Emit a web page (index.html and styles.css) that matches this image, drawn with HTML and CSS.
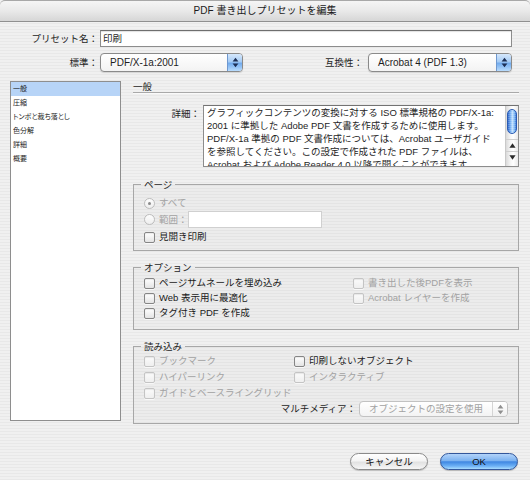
FILE: index.html
```html
<!DOCTYPE html>
<html lang="ja">
<head>
<meta charset="utf-8">
<title>PDF 書き出しプリセットを編集</title>
<link rel="stylesheet" href="styles.css">
</head>
<body>
<div class="window">
  <div class="titlebar">PDF 書き出しプリセットを編集</div>
  <div class="content">
    <div class="row row-name">
      <span class="lbl">プリセット名：</span>
      <div class="textfield tf-name">印刷</div>
    </div>
    <div class="row row-std">
      <span class="lbl">標準：</span>
      <div class="select sel-std">
        <span class="val">PDF/X-1a:2001</span>
        <span class="arr"><svg width="7" height="11" viewBox="0 0 7 11"><path d="M3.5 0.8 L6.4 4.4 L0.6 4.4 Z M0.6 6.6 L6.4 6.6 L3.5 10.2 Z"/></svg></span>
      </div>
      <span class="lbl2">互換性：</span>
      <div class="select sel-compat">
        <span class="val">Acrobat 4 (PDF 1.3)</span>
        <span class="arr"><svg width="7" height="11" viewBox="0 0 7 11"><path d="M3.5 0.8 L6.4 4.4 L0.6 4.4 Z M0.6 6.6 L6.4 6.6 L3.5 10.2 Z"/></svg></span>
      </div>
    </div>
    <div class="main">
      <ul class="list">
        <li class="sel">一般</li>
        <li>圧縮</li>
        <li>トンボと裁ち落とし</li>
        <li>色分解</li>
        <li>詳細</li>
        <li>概要</li>
      </ul>
      <div class="panel">
        <div class="phead">一般</div>
        <div class="detail">
          <span class="dlbl">詳細：</span>
          <div class="ta">
            <div class="ta-text">
              <div>グラフィックコンテンツの変換に対する ISO 標準規格の PDF/X-1a:</div>
              <div>2001 に準拠した Adobe PDF 文書を作成するために使用します。</div>
              <div>PDF/X-1a 準拠の PDF 文書作成については、Acrobat ユーザガイド</div>
              <div>を参照してください。この設定で作成された PDF ファイルは、</div>
              <div>Acrobat および Adobe Reader 4.0 以降で開くことができます。</div>
            </div>
            <div class="sb">
              <div class="track"><div class="thumb"></div></div>
              <div class="sbtn"><svg width="7" height="5" viewBox="0 0 7 5"><path d="M3.5 0.3 L6.6 4.7 L0.4 4.7 Z"/></svg></div>
              <div class="sbtn"><svg width="7" height="5" viewBox="0 0 7 5"><path d="M0.4 0.3 L6.6 0.3 L3.5 4.7 Z"/></svg></div>
            </div>
          </div>
        </div>

        <fieldset class="group g-page">
          <legend>ページ</legend>
          <div class="rb dis on r-all"><span class="circle"></span>すべて</div>
          <div class="rb dis r-range"><span class="circle"></span>範囲：<span class="tf-range"></span></div>
          <div class="cb c-spread"><span class="box"></span>見開き印刷</div>
        </fieldset>

        <fieldset class="group g-opt">
          <legend>オプション</legend>
          <div class="opt-grid">
            <div class="cb"><span class="box"></span>ページサムネールを埋め込み</div>
            <div class="cb dis"><span class="box"></span>書き出した後PDFを表示</div>
            <div class="cb"><span class="box"></span>Web 表示用に最適化</div>
            <div class="cb dis"><span class="box"></span>Acrobat レイヤーを作成</div>
            <div class="cb"><span class="box"></span>タグ付き PDF を作成</div>
          </div>
        </fieldset>

        <fieldset class="group g-inc">
          <legend>読み込み</legend>
          <div class="inc-grid">
            <div class="cb dis"><span class="box"></span>ブックマーク</div>
            <div class="cb"><span class="box"></span>印刷しないオブジェクト</div>
            <div class="cb dis"><span class="box"></span>ハイパーリンク</div>
            <div class="cb dis"><span class="box"></span>インタラクティブ</div>
            <div class="cb dis span2"><span class="box"></span>ガイドとベースライングリッド</div>
          </div>
          <div class="mm-row">
            <span class="mm-lbl">マルチメディア：</span>
            <div class="select sel-mm">
              <span class="val">オブジェクトの設定を使用</span>
              <span class="arr"><svg width="7" height="11" viewBox="0 0 7 11"><path d="M3.5 0.8 L6.4 4.4 L0.6 4.4 Z M0.6 6.6 L6.4 6.6 L3.5 10.2 Z"/></svg></span>
            </div>
          </div>
        </fieldset>
      </div>
    </div>
    <div class="buttons">
      <div class="btn btn-cancel">キャンセル</div>
      <div class="btn btn-ok">OK</div>
    </div>
  </div>
</div>
</body>
</html>
```

FILE: styles.css
```css
* { box-sizing: border-box; }
html, body { margin: 0; padding: 0; }
body {
  width: 530px;
  height: 480px;
  overflow: hidden;
  font-family: "Liberation Sans", "Noto Sans CJK JP", sans-serif;
  font-size: 9.5px;
  color: #1e1e1e;
  background: repeating-linear-gradient(to bottom, #f0f0f0 0, #f0f0f0 2px, #e8e8e8 2px, #e8e8e8 3px);
}

.titlebar {
  height: 22px;
  display: flex;
  align-items: center;
  justify-content: center;
  font-size: 10px;
  line-height: 12px;
  color: #1a1a1a;
  background: linear-gradient(to bottom, #f5f5f5 0%, #e9e9e9 50%, #d6d6d6 100%);
  border-top: 1px solid #a8a8a8;
  border-bottom: 1px solid #8f8f8f;
  border-radius: 5px 5px 0 0;
}

.content { padding: 8px 11px 0 10px; }

.row { display: flex; align-items: center; }
.row-name { height: 17px; }
.row-std { height: 19px; margin-top: 6px; }

.lbl {
  width: 88px;
  margin-right: 2px;
  text-align: right;
  white-space: nowrap;
  line-height: 12px;
}
.lbl2 {
  width: 120px;
  margin-right: 5px;
  text-align: right;
  white-space: nowrap;
  line-height: 12px;
}

.textfield {
  background: #fff;
  border: 1px solid #8c8c8c;
  border-top-color: #6e6e6e;
  box-shadow: inset 0 1px 1px rgba(0,0,0,0.12);
}
.tf-name {
  width: 412px;
  height: 17px;
  padding-left: 2px;
  font-size: 9.5px;
  line-height: 15px;
}

.select {
  display: flex;
  height: 19px;
  border: 1px solid #8a8a8a;
  border-radius: 4px;
  background: linear-gradient(to bottom, #ffffff, #f3f3f3);
  box-shadow: 0 1px 1px rgba(0,0,0,0.12);
  overflow: hidden;
  font-size: 10px;
}
.select .val {
  flex: 1;
  padding-left: 9px;
  line-height: 17px;
  white-space: nowrap;
}
.select .arr {
  width: 15px;
  display: flex;
  align-items: center;
  justify-content: center;
  border-left: 1px solid #6f98cf;
  background: linear-gradient(to bottom, #d6e8fc 0%, #a6ccf5 45%, #73acee 55%, #b9dcfd 100%);
}
.select .arr svg { fill: #1d2f55; }
.sel-std { width: 143px; }
.sel-compat { width: 144px; }

.main {
  display: flex;
  gap: 12px;
  margin-top: 9px;
}

.list {
  width: 111px;
  height: 340px;
  margin: 0;
  padding: 0;
  list-style: none;
  background: #fff;
  border: 1px solid #8e8e8e;
  font-size: 7px;
  font-feature-settings: "palt";
}
.list li {
  height: 14px;
  line-height: 14px;
  padding-left: 2px;
  white-space: nowrap;
}
.list li.sel { background: #b7d4f7; }

.panel { width: 386px; }

.phead {
  height: 12px;
  line-height: 11px;
  font-size: 9.5px;
  border-bottom: 1px solid #a9a9a9;
  box-shadow: 0 1px 0 #fafafa;
}

.detail {
  display: flex;
  margin-top: 12px;
}
.dlbl {
  width: 67px;
  margin-right: 3px;
  text-align: right;
  padding-top: 2px;
  line-height: 13px;
}
.ta {
  width: 316px;
  height: 62px;
  display: flex;
  background: #fff;
  border: 1px solid #8c8c8c;
  border-top-color: #737373;
}
.ta-text {
  flex: 1;
  overflow: hidden;
  padding: 1px 0 0 3px;
  line-height: 12.9px;
  white-space: nowrap;
  font-size: 9.5px;
}
.sb {
  width: 13px;
  display: flex;
  flex-direction: column;
  padding-bottom: 3px;
  border-left: 1px solid #c9c9c9;
  background: linear-gradient(to right, #dadada, #f4f4f4 35%, #ffffff 60%, #e9e9e9);
}
.sb .track { flex: 1; padding: 3px 1px 0 1px; }
.thumb {
  height: 25px;
  border-radius: 5px;
  border: 1px solid #2b5cb3;
  background:
    repeating-linear-gradient(to bottom, rgba(255,255,255,0.18) 0, rgba(255,255,255,0.18) 1px, transparent 1px, transparent 2px),
    linear-gradient(to right, #2f67cc 0%, #73adf1 30%, #c0e0ff 55%, #7db8f4 80%, #3a76d6 100%);
}
.sbtn {
  height: 12px;
  display: flex;
  align-items: center;
  justify-content: center;
  border-top: 1px solid #cfcfcf;
}
.sbtn svg { fill: #2a2a2a; }

fieldset.group {
  margin: 0;
  min-width: 0;
  border: 1px solid #a7a7a7;
  background: rgba(0,0,0,0.015);
  padding: 0 0 0 10px;
}
fieldset.group legend {
  margin-left: -3px;
  padding: 0 3px;
  height: 13px;
  line-height: 13px;
  font-size: 9.5px;
  color: #1e1e1e;
}

.g-page { margin-top: 11px !important; padding-top: 5px !important; padding-bottom: 6px !important; }
.g-opt { margin-top: 10px !important; padding-top: 2px !important; padding-bottom: 9px !important; }
.g-inc { margin-top: 10px !important; padding-top: 1px !important; padding-bottom: 6px !important; }

.cb, .rb {
  display: flex;
  align-items: center;
  height: 14px;
  white-space: nowrap;
  line-height: 12px;
  color: #1a1a1a;
}
.cb .box {
  width: 11px;
  height: 11px;
  margin-right: 4px;
  flex: none;
  border: 1px solid #858585;
  border-radius: 2px;
  background: linear-gradient(to bottom, #ffffff, #e4e4e4);
  box-shadow: inset 0 1px 1px rgba(0,0,0,0.08), 0 1px 0 rgba(255,255,255,0.7);
}
.dis { color: #a2a2a2; }
.cb.dis .box {
  border-color: #c4c4c4;
  background: linear-gradient(to bottom, #fbfbfb, #efefef);
}
.rb .circle {
  width: 11px;
  height: 11px;
  margin-right: 4px;
  flex: none;
  border-radius: 50%;
  border: 1px solid #bcbcbc;
  background: linear-gradient(to bottom, #fdfdfd, #eeeeee);
  display: flex;
  align-items: center;
  justify-content: center;
}
.rb.on .circle::after {
  content: "";
  width: 3px;
  height: 3px;
  border-radius: 50%;
  background: #8a8a8a;
}
.r-range { height: 17px; margin-top: 1px; }
.tf-range {
  width: 134px;
  height: 17px;
  margin-left: 0;
  background: #fff;
  border: 1px solid #d0d0d0;
}
.c-spread { margin-top: 2px; }

.opt-grid {
  display: grid;
  grid-template-columns: 209px 1fr;
  row-gap: 1px;
}
.inc-grid {
  display: grid;
  grid-template-columns: 150px 1fr;
  row-gap: 2px;
}
.span2 { grid-column: 1 / span 2; }

.mm-row {
  display: flex;
  justify-content: flex-end;
  align-items: center;
  margin-top: 1px;
  padding-right: 10px;
}
.mm-lbl { margin-right: 3px; line-height: 12px; }
.sel-mm {
  width: 149px;
  height: 16px;
  border-color: #c2c2c2;
  box-shadow: none;
  color: #a2a2a2;
  font-size: 9.5px;
}
.sel-mm .val { line-height: 14px; }
.sel-mm .arr {
  border-left: 1px solid #d4d4d4;
  background: linear-gradient(to bottom, #ffffff, #f0f0f0);
}
.sel-mm .arr svg { fill: #8f8f8f; }

.buttons {
  display: flex;
  justify-content: flex-end;
  gap: 12px;
  margin-top: 29px;
  margin-right: 1px;
}
.btn {
  width: 78px;
  height: 17px;
  border-radius: 9px;
  display: flex;
  align-items: center;
  justify-content: center;
  font-size: 9.5px;
  line-height: 12px;
  color: #111;
}
.btn-cancel {
  border: 1px solid #8a8a8a;
  background: linear-gradient(to bottom, #ffffff 0%, #f4f4f4 45%, #e2e2e2 55%, #f6f6f6 100%);
  box-shadow: 0 1px 1px rgba(0,0,0,0.18);
}
.btn-ok {
  border: 1px solid #33579b;
  background: linear-gradient(to bottom, #b3d4fa 0%, #7cb2f0 45%, #3f87e2 52%, #6cb0f5 80%, #a9dcff 100%);
  box-shadow: 0 1px 1px rgba(0,0,0,0.22);
}
```
